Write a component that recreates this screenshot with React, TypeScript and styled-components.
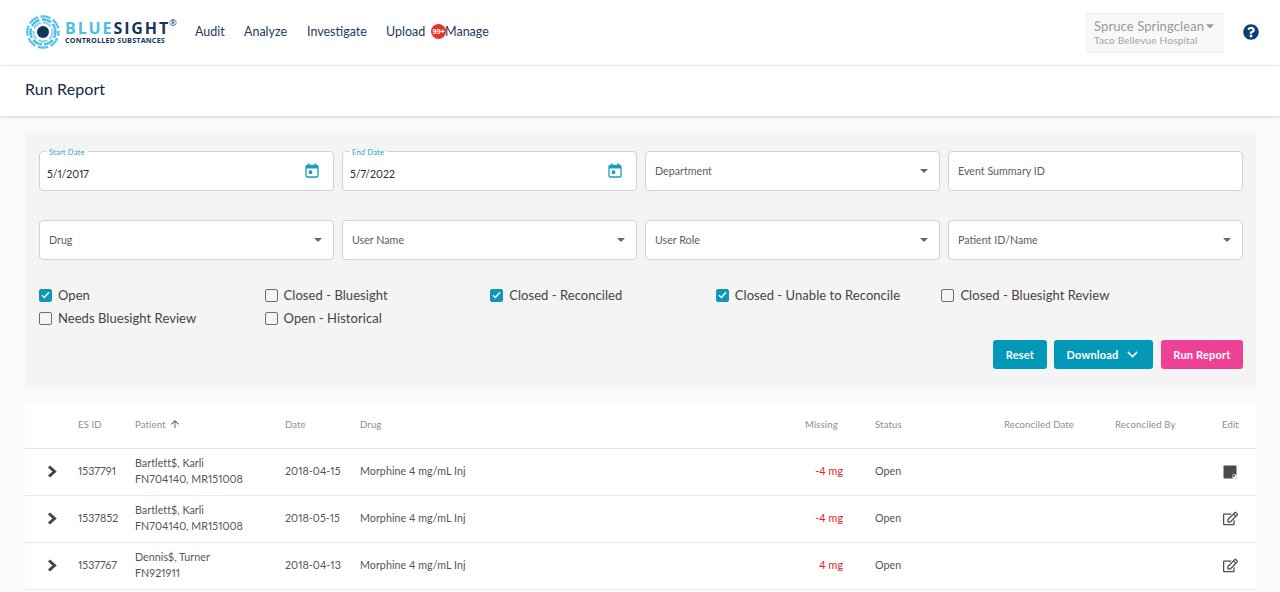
import React from 'react';
import styled, { createGlobalStyle } from 'styled-components';
import { FaQuestionCircle, FaRegEdit } from 'react-icons/fa';
import { MdArrowUpward, MdArrowDropDown } from 'react-icons/md';
import { ChevronDown } from 'lucide-react';

const FONT = `Lato, "Open Sans", "Liberation Sans", sans-serif`;

const Global = createGlobalStyle`
  html, body { margin: 0; padding: 0; background: #fafafa; height: 592px; overflow: hidden; }
  * { box-sizing: border-box; }
  body { font-family: ${FONT}; font-variant-numeric: proportional-nums; }
`;

const Page = styled.div`
  width: 1280px; height: 592px; overflow: hidden; background: #fafafa;
`;
const Header = styled.header`
  height: 66px; background: #fff; border-bottom: 1px solid #f0f0f0;
  display: flex; align-items: center; padding: 0 20px 3px 26px;
`;
const Brand = styled.div`
  display: flex; align-items: center; gap: 4px; width: 169px; flex: none;
  & > svg { margin: 2px 0 0 -1px; flex: none; }
`;
const BrandText = styled.div`
  display: flex; flex-direction: column; position: relative; top: 1px;
`;
const BrandName = styled.div`
  font-family: "Open Sans", sans-serif; font-weight: 700; font-size: 16px; line-height: 15px;
  letter-spacing: 1.9px; color: #4dbde9; white-space: nowrap;
  b { color: #12355b; font-weight: 700; }
  sup { font-size: 9px; font-weight: 400; color: #12355b; line-height: 0; position: relative; top: -1px; vertical-align: super; letter-spacing: 0; margin-left: -1px; }
`;
const BrandSub = styled.div`
  font-family: "Open Sans", sans-serif; font-weight: 700; font-size: 7.2px; line-height: 8px; letter-spacing: 0.2px; color: #12355b; white-space: nowrap;
`;
const Nav = styled.nav`
  display: flex; align-items: center; flex: 1; position: relative;
`;
const NavLink = styled.a<{ $w: number }>`
  font-size: 12.5px; color: #1e3a5f; width: ${p => p.$w}px; white-space: nowrap; flex: none;
`;
const NavBadged = styled.span`
  position: relative; display: block;
`;
const Badge = styled.span`
  position: absolute; left: 45px; top: 0; width: 15px; height: 15px; border-radius: 50%;
  background: #e8322a; color: #fff; font-size: 7.5px; font-weight: 700; line-height: 15px; text-align: center;
  font-family: "Liberation Sans", sans-serif; letter-spacing: -0.2px;
`;
const UserBox = styled.div`
  width: 137px; height: 40px; margin-right: 20px; background: #f8f8f8; border: 1px solid #efefef;
  padding: 2px 0 0 7px; color: #9a9a9a; flex: none; position: relative; top: 2px;
`;
const UserName = styled.div`
  font-size: 13px; line-height: 16px; letter-spacing: 0.1px; display: flex; align-items: center; white-space: nowrap;
  svg { margin-left: -4px; flex: none; }
`;
const UserOrg = styled.div`
  font-size: 10px; line-height: 13px; margin-top: -2px; letter-spacing: 0.2px; white-space: nowrap; color: #a2a2a2;
`;
const Help = styled.span`
  color: #0b3f7a; display: flex; font-size: 16px; width: 17px; flex: none; position: relative; top: 1px;
`;
const SubHeader = styled.div`
  height: 50px; background: #fff; box-shadow: 0 1px 3px rgba(0,0,0,.16);
  display: flex; align-items: center; padding: 0 25px 6px;
  font-size: 16px; color: #12284c; letter-spacing: 0.1px;
`;
const Panel = styled.section`
  margin: 17px 24px 16px 25px; height: 254px; background: #f4f4f4; padding: 18px 13px 0 14px;
`;
const FieldGrid = styled.div`
  display: grid; grid-template-columns: repeat(4, 295px); column-gap: 8px; row-gap: 29px;
`;
const Field = styled.div`
  position: relative; height: 40px; background: #fff; border: 1px solid #d2d2d2; border-radius: 4px;
  display: flex; align-items: center; justify-content: space-between; padding: 0 9px 2px 9px;
  font-size: 10.7px; color: #5d5d5d;
`;
const FloatLabel = styled.span`
  position: absolute; left: 6px; top: -4px; padding: 0 3px; font-size: 7.5px; line-height: 9px; color: #2ba7c9; background: linear-gradient(#f4f4f4 40%, #fff 40%);
  letter-spacing: 0.2px;
`;
const DateValue = styled.span`
  font-size: 10.5px; color: #2a2a2a; position: relative; top: 4px; left: -2px;
`;
const CalIcon = styled.svg`
  width: 14px; height: 15px; position: relative; right: 5px; flex: none;
`;
const Caret = styled.span`
  width: 0; height: 0; border-left: 4.5px solid transparent; border-right: 4.5px solid transparent; border-top: 4.5px solid #666; margin: 2px 2px 0 0;
`;
const Checks = styled.div`
  display: grid; grid-template-columns: repeat(5, 225.6px); row-gap: 9px; margin-top: 28px;
`;
const Check = styled.label`
  display: flex; align-items: center; gap: 6px; height: 14px; font-size: 13px; color: #444; letter-spacing: 0.05px; white-space: nowrap;
`;
const Box = styled.span<{ $on?: boolean }>`
  width: 13px; height: 13px; border-radius: 2px; flex: none; display: flex; align-items: center; justify-content: center;
  background: ${p => (p.$on ? '#0f97b8' : 'transparent')};
  border: 1px solid ${p => (p.$on ? '#0f97b8' : '#6e6e6e')};
`;
const Actions = styled.div`
  display: flex; justify-content: flex-end; gap: 8px; margin-top: 15px;
`;
const Btn = styled.button<{ $pink?: boolean; $w: number }>`
  width: ${p => p.$w}px; height: 29px; border: none; border-radius: 3px; color: #fff; font-family: ${FONT};
  font-size: 11px; font-weight: 700; letter-spacing: 0.2px; padding: 0 0 1px; display: flex; align-items: center; justify-content: center; gap: 5px;
  background: ${p => (p.$pink ? '#ee4196' : '#0397b8')};
  &:first-child { margin-right: -1px; }
`;
const Table = styled.section`
  margin: 0 24px 0 25px; background: #fff; padding-bottom: 20px;
`;
const Cols = `grid-template-columns: 53px 57px 150px 75px 445px 70px 129px 111px 107px 34px;`;
const HeadRow = styled.div`
  display: grid; ${Cols} height: 46px; align-items: center; border-bottom: 1px solid #e6e6e6;
  font-size: 9.5px; color: #8d8d8d; letter-spacing: 0.15px; padding-bottom: 3px;
`;
const Row = styled.div`
  display: grid; ${Cols} height: 47px; align-items: center; border-bottom: 1px solid #e9e9e9;
  font-size: 10.7px; color: #555; letter-spacing: 0.05px; padding-bottom: 3px;
`;
const Sorted = styled.span`
  display: flex; align-items: center; gap: 3px; svg { font-size: 12px; color: #666; }
`;
const Expand = styled.span`
  display: flex; padding: 2px 0 0 22px;
`;
const Patient = styled.div`
  line-height: 16px;
`;
const Missing = styled.span`
  color: #e8201c; text-align: right; padding-right: 32px;
`;
const EditCell = styled.span`
  display: flex; padding: 2px 0 0 1px; color: #4c4c4c; font-size: 15px;
`;

const Logo = () => {
  const dots: React.ReactNode[] = [];
  [[9.5, 26, 2.2], [12.5, 32, 2.3], [15.6, 38, 2.4]].forEach(([r, n, s], ri) => {
    for (let i = 0; i < n; i++) {
      if ((i + ri) % 5 === 4) continue;
      const a = (i / n) * Math.PI * 2;
      dots.push(
        <rect key={`${ri}-${i}`} x={18 + r * Math.cos(a) - s / 2} y={18 + r * Math.sin(a) - s / 2} width={s} height={s}
          fill={ri === 0 ? '#7fd0ef' : ri === 1 ? '#35b4e6' : '#4cbfea'} transform={`rotate(${(i / n) * 360} ${18 + r * Math.cos(a)} ${18 + r * Math.sin(a)})`} />
      );
    }
  });
  return (
    <svg width="36" height="36" viewBox="0 0 36 36">
      {dots}
      <circle cx="18" cy="18" r="6" fill="#12355b" />
    </svg>
  );
};

const Calendar = () => (
  <CalIcon viewBox="0 0 14 15">
    <rect x="1" y="2.5" width="12" height="11.5" rx="1.2" fill="none" stroke="#1a9cbd" strokeWidth="1.3" />
    <rect x="1" y="2.5" width="12" height="3" fill="#1a9cbd" />
    <rect x="3" y="0.5" width="1.5" height="3" fill="#1a9cbd" />
    <rect x="9.5" y="0.5" width="1.5" height="3" fill="#1a9cbd" />
    <rect x="3.8" y="7.5" width="3.4" height="3.4" fill="#1a9cbd" />
  </CalIcon>
);

const ExpandIcon = () => (
  <svg width="10" height="13" viewBox="0 0 10 13">
    <path d="M2 1.5 L7.5 6.5 L2 11.5" fill="none" stroke="#444" strokeWidth="3" />
  </svg>
);

const NoteIcon = () => (
  <svg width="14" height="14" viewBox="0 0 14 14">
    <rect x="0.5" y="0.5" width="13" height="13" rx="0.8" fill="#4a4a4a" />
    <path d="M9.5 13.5 V9.5 H13.5 V13.5 Z" fill="#fff" />
    <rect x="10" y="10" width="1.8" height="1.8" fill="#4a4a4a" />
  </svg>
);

const checks: [string, boolean][] = [
  ['Open', true], ['Closed - Bluesight', false], ['Closed - Reconciled', true],
  ['Closed - Unable to Reconcile', true], ['Closed - Bluesight Review', false],
  ['Needs Bluesight Review', false], ['Open - Historical', false],
];

const rows = [
  { id: '1537791', name: 'Bartlett$, Karli', ref: 'FN704140, MR151008', date: '2018-04-15', miss: '-4 mg', note: true },
  { id: '1537852', name: 'Bartlett$, Karli', ref: 'FN704140, MR151008', date: '2018-05-15', miss: '-4 mg', note: false },
  { id: '1537767', name: 'Dennis$, Turner', ref: 'FN921911', date: '2018-04-13', miss: '4 mg', note: false },
];

export default function App() {
  return (
    <Page>
      <Global />
      <Header>
        <Brand>
          <Logo />
          <BrandText>
            <BrandName>BLUE<b>SIGHT</b><sup>®</sup></BrandName>
            <BrandSub>CONTROLLED SUBSTANCES</BrandSub>
          </BrandText>
        </Brand>
        <Nav>
          <NavLink $w={49}>Audit</NavLink>
          <NavLink $w={63}>Analyze</NavLink>
          <NavLink $w={79}>Investigate</NavLink>
          <NavLink $w={59}>
            <NavBadged>Upload<Badge>99+</Badge></NavBadged>
          </NavLink>
          <NavLink $w={50}>Manage</NavLink>
        </Nav>
        <UserBox>
          <UserName>Spruce Springclean<MdArrowDropDown size={20} /></UserName>
          <UserOrg>Taco Bellevue Hospital</UserOrg>
        </UserBox>
        <Help><FaQuestionCircle /></Help>
      </Header>
      <SubHeader>Run Report</SubHeader>
      <Panel>
        <FieldGrid>
          <Field><FloatLabel>Start Date</FloatLabel><DateValue>5/1/2017</DateValue><Calendar /></Field>
          <Field><FloatLabel>End Date</FloatLabel><DateValue>5/7/2022</DateValue><Calendar /></Field>
          <Field>Department<Caret /></Field>
          <Field>Event Summary ID</Field>
          <Field>Drug<Caret /></Field>
          <Field>User Name<Caret /></Field>
          <Field>User Role<Caret /></Field>
          <Field>Patient ID/Name<Caret /></Field>
        </FieldGrid>
        <Checks>
          {checks.map(([label, on]) => (
            <Check key={label}>
              <Box $on={on}>
                {on && (
                  <svg width="9" height="8" viewBox="0 0 9 8">
                    <path d="M1 4.2 L3.4 6.5 L8 1.3" fill="none" stroke="#fff" strokeWidth="1.5" />
                  </svg>
                )}
              </Box>
              {label}
            </Check>
          ))}
        </Checks>
        <Actions>
          <Btn $w={54}>Reset</Btn>
          <Btn $w={99}>Download<ChevronDown size={17} strokeWidth={2} /></Btn>
          <Btn $w={82} $pink>Run Report</Btn>
        </Actions>
      </Panel>
      <Table>
        <HeadRow>
          <span />
          <span>ES ID</span>
          <Sorted>Patient <MdArrowUpward /></Sorted>
          <span>Date</span>
          <span>Drug</span>
          <span>Missing</span>
          <span>Status</span>
          <span>Reconciled Date</span>
          <span>Reconciled By</span>
          <span>Edit</span>
        </HeadRow>
        {rows.map(r => (
          <Row key={r.id}>
            <Expand><ExpandIcon /></Expand>
            <span>{r.id}</span>
            <Patient>{r.name}<br />{r.ref}</Patient>
            <span>{r.date}</span>
            <span>Morphine 4 mg/mL Inj</span>
            <Missing>{r.miss}</Missing>
            <span>Open</span>
            <span />
            <span />
            <EditCell>{r.note ? <NoteIcon /> : <FaRegEdit />}</EditCell>
          </Row>
        ))}
      </Table>
    </Page>
  );
}
